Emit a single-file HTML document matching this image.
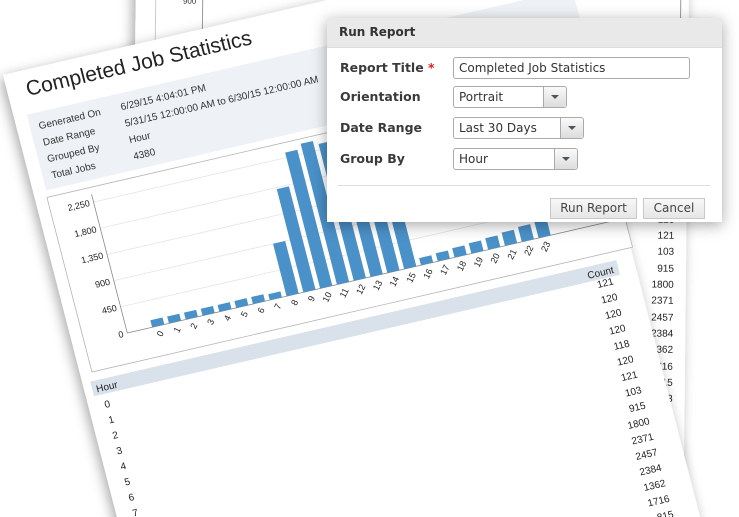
<!DOCTYPE html>
<html><head><meta charset="utf-8"><style>
html,body{margin:0;padding:0;width:739px;height:517px;overflow:hidden;background:#fff;}
svg{position:absolute;left:0;top:0}
.dlg{position:absolute;left:327px;top:18px;width:395px;height:204px;background:#fff;box-shadow:0 3px 14px rgba(0,0,0,.35);font-family:"DejaVu Sans","Liberation Sans",sans-serif;font-size:12px;color:#333;}
.hd{height:29px;background:#e9e9e9;border-bottom:1px solid #ddd;font-weight:bold;line-height:29px;padding-left:12px;font-size:12px;color:#333}
.lb{position:absolute;left:13px;font-weight:bold;font-size:12.5px;color:#3a3a3a}
.in{position:absolute;left:126px;height:22px;border:1px solid #aaa;border-radius:3px;background:#fff;box-sizing:border-box;line-height:20px;padding-left:5px;font-size:12px;color:#333}
.bt{position:absolute;right:0;top:0;width:22px;height:20px;border-left:1px solid #aaa;background:linear-gradient(#fafafa,#dcdcdc);border-radius:0 3px 3px 0}
.bt:after{content:"";position:absolute;left:7px;top:8px;border-left:4px solid transparent;border-right:4px solid transparent;border-top:4px solid #4a5560}
.btn{position:absolute;top:180px;height:21px;border:1px solid #c8c8c8;background:linear-gradient(#f7f7f7,#e6e6e6);box-sizing:border-box;line-height:19px;text-align:center;font-size:12px;color:#444}
</style></head><body>
<svg width="739" height="517" viewBox="0 0 739 517" font-family="Liberation Sans, Arial, sans-serif">
<defs>
<filter id="sh" x="-20%" y="-20%" width="140%" height="140%"><feDropShadow dx="-3" dy="3" stdDeviation="6" flood-color="#000" flood-opacity="0.35"/></filter>
</defs>
<g transform="rotate(0.6 410 260)">
<rect x="133" y="-30" width="553" height="580" fill="#fff" filter="url(#sh)"/>
<line x1="153" y1="-5" x2="153" y2="45" stroke="#ccc"/>
<line x1="200" y1="-5" x2="200" y2="45" stroke="#999"/>
<text x="187" y="6" font-size="8" text-anchor="middle" fill="#333">900</text>
<line x1="678" y1="-5" x2="678" y2="20" stroke="#999"/>
<g font-size="10" fill="#222" text-anchor="end">
<text x="674" y="220">120</text>
<text x="674" y="236">121</text>
<text x="674" y="252">103</text>
<text x="674" y="269">915</text>
<text x="674" y="285">1800</text>
<text x="674" y="301">2371</text>
<text x="674" y="318">2457</text>
<text x="674" y="334">2384</text>
<text x="674" y="350">1362</text>
<text x="674" y="367">1716</text>
<text x="674" y="383">815</text>
<text x="674" y="399">273</text>
<text x="674" y="415">123</text>
<text x="674" y="431">0</text>
<text x="674" y="447">0</text>
</g>
</g>
<g transform="matrix(0.974,-0.225,0.25,0.97,3,75)">
<rect x="0" y="0" width="565" height="640" fill="#fff" filter="url(#sh)"/>
<text x="19" y="26" font-size="21" fill="#222">Completed Job Statistics</text>
<rect x="13" y="44" width="560" height="78" fill="#eef2f6"/>
<g font-size="10" fill="#333">
<text x="22" y="61">Generated On</text>
<text x="22" y="78">Date Range</text>
<text x="22" y="95">Grouped By</text>
<text x="22" y="112">Total Jobs</text>
<text x="106" y="61">6/29/15 4:04:01 PM</text>
<text x="106" y="78">5/31/15 12:00:00 AM to 6/30/15 12:00:00 AM</text>
<text x="106" y="95">Hour</text>
<text x="106" y="112">4380</text>
</g>
<rect x="12" y="129" width="555" height="180" fill="#fff" stroke="#b5b5b5" stroke-width="0.8"/>
<g stroke="#e4e4e4" stroke-width="0.8">
<line x1="56" y1="252" x2="560" y2="252"/>
<line x1="56" y1="225" x2="560" y2="225"/>
<line x1="56" y1="198" x2="560" y2="198"/>
<line x1="56" y1="171" x2="560" y2="171"/>
<line x1="56" y1="144" x2="560" y2="144"/>
</g>
<line x1="56" y1="136" x2="56" y2="279" stroke="#888" stroke-width="0.8"/>
<line x1="56" y1="279" x2="560" y2="279" stroke="#888" stroke-width="0.8"/>
<g font-size="9" fill="#222" text-anchor="end">
<text x="52" y="282">0</text>
<text x="52" y="255">450</text>
<text x="52" y="228">900</text>
<text x="52" y="201">1,350</text>
<text x="52" y="174">1,800</text>
<text x="52" y="147">2,250</text>
</g>
<g fill="#4a91c9">
<rect x="81.5" y="271.8" width="12.5" height="7.2"/>
<rect x="98.75" y="271.9" width="12.5" height="7.1"/>
<rect x="116" y="271.9" width="12.5" height="7.1"/>
<rect x="133.25" y="271.9" width="12.5" height="7.1"/>
<rect x="150.5" y="272" width="12.5" height="7"/>
<rect x="167.75" y="271.9" width="12.5" height="7.1"/>
<rect x="185" y="271.8" width="12.5" height="7.2"/>
<rect x="202.25" y="272.9" width="12.5" height="6.1"/>
<rect x="219.5" y="224.9" width="12.5" height="54.1"/>
<rect x="236.75" y="172.6" width="12.5" height="106.4"/>
<rect x="254" y="138.9" width="12.5" height="140.1"/>
<rect x="271.25" y="133.8" width="12.5" height="145.2"/>
<rect x="288.5" y="138.1" width="12.5" height="140.9"/>
<rect x="305.75" y="198.5" width="12.5" height="80.5"/>
<rect x="323" y="177.6" width="12.5" height="101.4"/>
<rect x="340.25" y="230.8" width="12.5" height="48.2"/>
<rect x="357.5" y="271.7" width="12.5" height="7.3"/>
<rect x="374.75" y="270.7" width="12.5" height="8.3"/>
<rect x="392" y="269.5" width="12.5" height="9.5"/>
<rect x="409.25" y="268.4" width="12.5" height="10.6"/>
<rect x="426.5" y="267.2" width="12.5" height="11.8"/>
<rect x="443.75" y="265.4" width="12.5" height="13.6"/>
<rect x="461" y="263.6" width="12.5" height="15.4"/>
<rect x="478.25" y="261.3" width="12.5" height="17.7"/>
</g>
<g font-size="9" fill="#222" text-anchor="end">
<text transform="translate(91.7,287) rotate(-50)">0</text>
<text transform="translate(109,287) rotate(-50)">1</text>
<text transform="translate(126.2,287) rotate(-50)">2</text>
<text transform="translate(143.5,287) rotate(-50)">3</text>
<text transform="translate(160.7,287) rotate(-50)">4</text>
<text transform="translate(178,287) rotate(-50)">5</text>
<text transform="translate(195.2,287) rotate(-50)">6</text>
<text transform="translate(212.5,287) rotate(-50)">7</text>
<text transform="translate(229.7,287) rotate(-50)">8</text>
<text transform="translate(247,287) rotate(-50)">9</text>
<text transform="translate(264.2,287) rotate(-50)">10</text>
<text transform="translate(281.5,287) rotate(-50)">11</text>
<text transform="translate(298.7,287) rotate(-50)">12</text>
<text transform="translate(316,287) rotate(-50)">13</text>
<text transform="translate(333.2,287) rotate(-50)">14</text>
<text transform="translate(350.5,287) rotate(-50)">15</text>
<text transform="translate(367.7,287) rotate(-50)">16</text>
<text transform="translate(385,287) rotate(-50)">17</text>
<text transform="translate(402.2,287) rotate(-50)">18</text>
<text transform="translate(419.5,287) rotate(-50)">19</text>
<text transform="translate(436.7,287) rotate(-50)">20</text>
<text transform="translate(454,287) rotate(-50)">21</text>
<text transform="translate(471.2,287) rotate(-50)">22</text>
<text transform="translate(488.5,287) rotate(-50)">23</text>
</g>
<rect x="8" y="318" width="540" height="15" fill="#d9e1eb"/>
<text x="12" y="330" font-size="10" fill="#222">Hour</text>
<text x="543" y="330" font-size="10" fill="#222" text-anchor="end">Count</text>
<g font-size="10" fill="#222">
<text x="16" y="347">0</text><text x="16" y="363">1</text><text x="16" y="379">2</text><text x="16" y="395">3</text>
<text x="16" y="411">4</text><text x="16" y="427">5</text><text x="16" y="443">6</text><text x="16" y="459">7</text>
<text x="16" y="475">8</text><text x="16" y="491">9</text>
</g>
<g font-size="10" fill="#222" text-anchor="end">
<text x="540" y="341">121</text><text x="540" y="357">120</text><text x="540" y="373">120</text><text x="540" y="389">120</text>
<text x="540" y="405">118</text><text x="540" y="421">120</text><text x="540" y="437">121</text><text x="540" y="453">103</text>
<text x="540" y="469">915</text><text x="540" y="485">1800</text><text x="540" y="501">2371</text><text x="540" y="517">2457</text>
<text x="540" y="533">2384</text><text x="540" y="549">1362</text><text x="540" y="565">1716</text><text x="540" y="581">815</text>
<text x="540" y="597">273</text>
</g>
</g>
</svg>
<div class="dlg">
<div class="hd">Run Report</div>
<div class="lb" style="top:42px">Report Title <span style="color:#d22">*</span></div>
<div class="in" style="top:39px;width:237px">Completed Job Statistics</div>
<div class="lb" style="top:71px">Orientation</div>
<div class="in" style="top:68px;width:114px">Portrait<div class="bt"></div></div>
<div class="lb" style="top:102px">Date Range</div>
<div class="in" style="top:99px;width:131px">Last 30 Days<div class="bt"></div></div>
<div class="lb" style="top:133px">Group By</div>
<div class="in" style="top:130px;width:125px">Hour<div class="bt"></div></div>
<div style="position:absolute;left:11px;right:12px;top:167px;border-top:1px solid #ddd"></div>
<div class="btn" style="left:223px;width:87px">Run Report</div>
<div class="btn" style="left:316px;width:62px">Cancel</div>
</div>
</body></html>
